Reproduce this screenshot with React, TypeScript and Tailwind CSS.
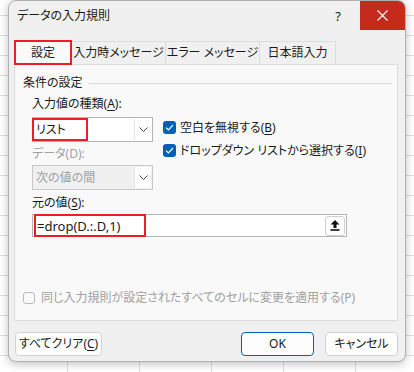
import React from 'react';

const FONT = "font-['Noto_Sans','Noto_Sans_CJK_JP',sans-serif] [font-feature-settings:'palt']";

function Ul({ children }: { children: React.ReactNode }) {
  return <span className="underline underline-offset-2">{children}</span>;
}

function Chevron({ color = '#444' }: { color?: string }) {
  return (
    <svg width="9" height="5" viewBox="0 0 9 5" fill="none">
      <path d="M0.5 0.5 L4.5 4.5 L8.5 0.5" stroke={color} strokeWidth="1" />
    </svg>
  );
}

function Check() {
  return (
    <span className="w-[13px] h-[13px] rounded-[3px] bg-[#005fb8] flex items-center justify-center shrink-0">
      <svg width="9" height="7" viewBox="0 0 9 7" fill="none">
        <path d="M1 3.6 L3.4 6 L8 1" stroke="#fff" strokeWidth="1.2" />
      </svg>
    </span>
  );
}

function Select({ value, disabled, marked }: { value: string; disabled?: boolean; marked?: boolean }) {
  return (
    <div
      className={`w-[121px] h-[25px] flex border ${
        disabled ? 'bg-[#f0f0f0] border-[#c9c9c9] text-[#a0a0a0]' : 'bg-white border-[#b5b5b5] text-[#1a1a1a]'
      }`}
    >
      <div className="flex-1 flex items-center">
        <div
          className={`h-full flex items-center ${
            marked ? 'w-[56px] border-2 border-[#ee1c25] -my-px -ml-px pl-[2px]' : 'pl-[3px]'
          }`}
        >
          {value}
        </div>
      </div>
      <div className="w-[17px] my-px mr-px bg-white border-l border-[#e3e3e3] flex items-center justify-center">
        <Chevron />
      </div>
    </div>
  );
}

function Button({ label, primary, w }: { label: React.ReactNode; primary?: boolean; w: string }) {
  return (
    <div
      className={`${w} h-[24px] rounded-[4px] bg-[#fdfdfd] border flex items-center justify-center text-[#1a1a1a] whitespace-nowrap ${
        primary ? 'border-[#005fb8]' : 'border-[#d2d2d2]'
      }`}
    >
      {label}
    </div>
  );
}

export default function App() {
  return (
    <div
      className={`w-[414px] h-[372px] overflow-hidden bg-white bg-[linear-gradient(to_right,#dedede_1px,transparent_1px),linear-gradient(to_bottom,#dedede_1px,transparent_1px)] bg-[size:72px_20px] bg-[position:-5px_15px] pl-[8px] ${FONT} text-[12px] leading-[16px] whitespace-nowrap`}
    >
      <div className="w-[398px] h-[362px] bg-[#f0f0f0] rounded-lg border border-[#b0b0b0] shadow-[0_2px_8px_rgba(0,0,0,0.25)] flex flex-col overflow-hidden text-[#1a1a1a]">
        {/* Title bar */}
        <div className="h-[29px] flex items-center shrink-0">
          <span className="pl-[8px] flex-1">データの入力規則</span>
          <span className="w-[20px] text-center mr-[12px] text-[13px]">?</span>
          <div className="w-[45px] h-full bg-[#c42b1c] flex items-center justify-center">
            <svg width="11" height="11" viewBox="0 0 11 11" fill="none">
              <path d="M0.5 0.5 L10.5 10.5 M10.5 0.5 L0.5 10.5" stroke="#fff" strokeWidth="1.1" />
            </svg>
          </div>
        </div>

        {/* Tabs */}
        <div className="flex mt-[10px] ml-[5px] h-[24px] shrink-0">
          <div className="w-[58px] border-2 border-[#ee1c25] bg-[#f9f9f9] flex items-center justify-center -mb-px z-10">設定</div>
          <div className="w-[94px] border-t border-r border-[#dcdcdc] mt-[1px] flex items-center justify-center">入力時メッセージ</div>
          <div className="w-[94px] border-t border-r border-[#dcdcdc] mt-[1px] flex items-center justify-center">エラー メッセージ</div>
          <div className="w-[76px] border-t border-r border-[#dcdcdc] mt-[1px] flex items-center justify-center">日本語入力</div>
        </div>

        {/* Tab panel */}
        <div className="ml-[5px] w-[384px] h-[257px] bg-[#f9f9f9] border border-[#dcdcdc] flex flex-col shrink-0">
          <div className="flex items-center mt-[10px] ml-[8px] mr-[5px] h-[16px]">
            <span>条件の設定</span>
            <div className="flex-1 h-px bg-[#dcdcdc] ml-[6px]" />
          </div>

          <div className="ml-[17px] mt-[5px] flex flex-col">
            <span>
              入力値の種類(<Ul>A</Ul>):
            </span>
            <div className="flex mt-[5px]">
              <div className="flex flex-col">
                <Select value="リスト" marked />
                <span className="mt-[4px] text-[#a0a0a0]">データ(D):</span>
                <div className="mt-[3px]">
                  <Select value="次の値の間" disabled />
                </div>
              </div>
              <div className="flex flex-col ml-[10px] mt-[3px] gap-[8px]">
                <div className="flex items-center gap-[4px] h-[15px]">
                  <Check />
                  <span>
                    空白を無視する(<Ul>B</Ul>)
                  </span>
                </div>
                <div className="flex items-center gap-[4px] h-[15px]">
                  <Check />
                  <span>
                    ドロップダウン リストから選択する(<Ul>I</Ul>)
                  </span>
                </div>
              </div>
            </div>

            <span className="mt-[5px]">
              元の値(<Ul>S</Ul>):
            </span>
            <div className="mt-[3px] w-[315px] h-[23px] bg-white border border-[#b5b5b5] flex items-center">
              <div className="w-[112px] h-[23px] -my-px ml-[1px] border-2 border-[#ee1c25] flex items-center pl-[1px] text-[13px]">
                =drop(D.:.D,1)
              </div>
              <div className="flex-1" />
              <div className="w-[20px] h-[20px] mr-[1px] rounded-[3px] border border-[#d0d0d0] bg-[#fdfdfd] flex items-center justify-center">
                <svg width="10" height="11" viewBox="0 0 10 11" fill="#111">
                  <path d="M5 0 L9.5 4.5 L6.5 4.5 L6.5 8 L3.5 8 L3.5 4.5 L0.5 4.5 Z" />
                  <rect x="0.5" y="9.2" width="9" height="1.6" />
                </svg>
              </div>
            </div>
          </div>

          <div className="flex-1" />
          <div className="flex items-center ml-[8px] mb-[14px] gap-[6px] text-[#a0a0a0]">
            <span className="w-[12px] h-[12px] rounded-[3px] border border-[#b9b9b9] bg-[#f9f9f9]" />
            <span>同じ入力規則が設定されたすべてのセルに変更を適用する(P)</span>
          </div>
        </div>

        {/* Buttons */}
        <div className="flex items-center mt-[11px] ml-[6px] mr-[7px]">
          <Button
            w="w-[87px]"
            label={
              <span>
                すべてクリア(<Ul>C</Ul>)
              </span>
            }
          />
          <div className="flex-1" />
          <Button w="w-[73px]" primary label="OK" />
          <div className="w-[11px]" />
          <Button w="w-[73px]" label="キャンセル" />
        </div>
      </div>
    </div>
  );
}
